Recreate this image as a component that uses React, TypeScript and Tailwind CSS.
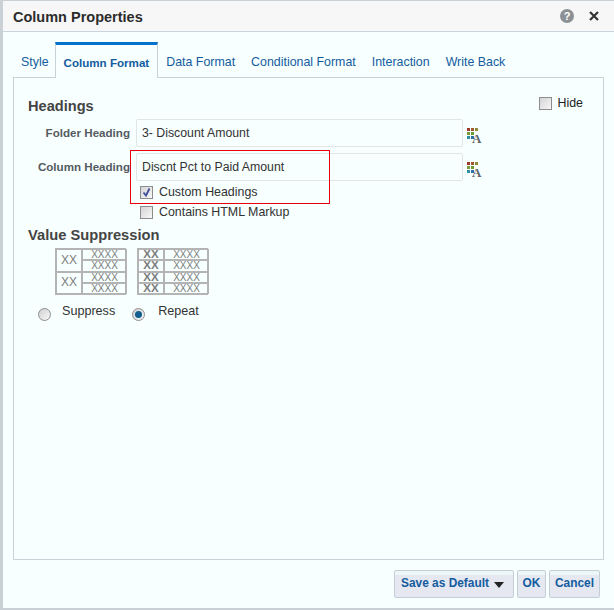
import React from "react";

const font = { fontFamily: '"Liberation Sans", Arial, sans-serif' };

const tabs = ["Style", "Column Format", "Data Format", "Conditional Format", "Interaction", "Write Back"];

const FormatIcon = () => (
  <svg width="18" height="19" viewBox="0 0 18 19" className="shrink-0">
    <rect x="1" y="0" width="3" height="3" fill="#9c3a32" />
    <rect x="5" y="0" width="3" height="3" fill="#a3552c" />
    <rect x="9" y="0" width="3" height="3" fill="#8f8a3a" />
    <rect x="1" y="4" width="3" height="3" fill="#7a9a35" />
    <rect x="5" y="4" width="3" height="3" fill="#6f9a35" />
    <rect x="1" y="8" width="3" height="3" fill="#2f8f9c" />
    <rect x="5" y="8" width="3" height="3" fill="#2d6fa8" />
    <text x="6" y="15" fontSize="13" fontWeight="700" fill="#5f6468" fontFamily="Liberation Serif, serif">A</text>
  </svg>
);

const Check = ({ checked }: { checked?: boolean }) => (
  <span className="relative block h-[13px] w-[13px] shrink-0 border border-[#8d8d8d] bg-gradient-to-br from-[#d4d4d4] to-[#f8f8f8]">
    {checked && (
      <svg viewBox="0 0 11 11" className="absolute inset-0 h-[11px] w-[11px]">
        <path d="M2.5 5.5 L5 8.5 L8.5 1.5" fill="none" stroke="#3f4f9a" strokeWidth="1.8" />
      </svg>
    )}
  </span>
);

const Radio = ({ on }: { on?: boolean }) => (
  <span className="flex h-[13px] w-[13px] shrink-0 items-center justify-center rounded-full border border-[#8d8d8d] bg-gradient-to-br from-[#d0d0d0] to-[#f8f8f8]">
    {on && <span className="block h-[7px] w-[7px] rounded-full bg-[#125f8f]" />}
  </span>
);

const PatternCell = ({ children, className = "" }: { children: React.ReactNode; className?: string }) => (
  <div className={`flex min-h-0 items-center justify-center overflow-hidden border border-[#b4b4b4] text-[#7d7d7d] ${className}`}>
    {children}
  </div>
);

const Pattern = ({ merged }: { merged?: boolean }) => {
  const xxxx = [0, 1, 2, 3];
  return (
    <div className="grid h-[47px] w-[71px] grid-cols-[26px_45px] grid-rows-4 border border-[#b4b4b4] text-[10px] leading-[9px]">
      {merged ? (
        <>
          <PatternCell className="row-span-2 col-start-1 row-start-1 text-[12px]">XX</PatternCell>
          <PatternCell className="row-span-2 col-start-1 row-start-3 text-[12px]">XX</PatternCell>
        </>
      ) : (
        xxxx.map((i) => (
          <PatternCell key={i} className={`col-start-1 text-[11.5px] font-bold ${["row-start-1", "row-start-2", "row-start-3", "row-start-4"][i]}`}>
            XX
          </PatternCell>
        ))
      )}
      {xxxx.map((i) => (
        <PatternCell key={i} className={`col-start-2 ${["row-start-1", "row-start-2", "row-start-3", "row-start-4"][i]}`}>
          XXXX
        </PatternCell>
      ))}
    </div>
  );
};

const HeadingRow = ({ label, value }: { label: string; value: string }) => (
  <div className="flex items-start">
    <div className="mt-[5px] w-[102px] whitespace-nowrap text-right text-[11.6px] font-bold text-[#555b61]">{label}</div>
    <div className="ml-[6px] flex h-[28px] w-[327px] items-center rounded-[2px] border border-[#e0e6e6] pl-[5px] text-[12.3px] text-[#333]">
      {value}
    </div>
    <div className="ml-[3px] mt-[9px]">
      <FormatIcon />
    </div>
  </div>
);

export default function App() {
  return (
    <div
      style={font}
      className="relative flex h-[610px] w-[614px] flex-col overflow-hidden border-l-[3px] border-t border-b-[2px] border-[#c9d0d6] bg-[#f7ffff]"
    >
      <div className="flex h-[31px] shrink-0 items-center justify-between border-b border-[#c9d5dd] bg-[#f7f7f7] pl-[10px] pr-[15px]">
        <span className="pt-[3px] text-[14.5px] font-bold text-[#2c2c2c]">Column Properties</span>
        <div className="flex items-center gap-[15px]">
          <span className="flex h-[14px] w-[14px] items-center justify-center rounded-full bg-[#8b9195] text-[11px] font-bold text-white">?</span>
          <svg width="10" height="10" viewBox="0 0 10 10">
            <path d="M1 1 L9 9 M9 1 L1 9" stroke="#333" strokeWidth="2.2" />
          </svg>
        </div>
      </div>

      <div className="flex h-[45px] shrink-0 items-end pl-[10px] pr-[10px]">
        <div className="z-10 -mb-[1px] flex items-end">
          {tabs.map((t) =>
            t === "Column Format" ? (
              <div
                key={t}
                className="flex h-[36px] items-center whitespace-nowrap border-x border-t-[3px] border-[#c9d2d6] border-t-[#0572ce] bg-[#f7ffff] px-[8px] pt-[2px] text-[11.6px] font-bold text-[#145c9e]"
              >
                {t}
              </div>
            ) : (
              <div
                key={t}
                className={`flex h-[36px] items-center whitespace-nowrap pl-[8px] pt-[4px] text-[12.4px] text-[#145c9e] ${t === "Style" ? "pr-[6px]" : "pr-[8px]"}`}
              >
                {t}
              </div>
            )
          )}
        </div>
      </div>

      <div className="mx-[10px] flex h-[483px] shrink-0 flex-col border border-[#c9d2d6] pl-[14px] pt-[20px]">
        <div className="flex h-[17px] items-start justify-between pr-[20px]">
          <div className="text-[14.6px] font-bold leading-[17px] text-[#444]">Headings</div>
          <label className="-mt-[4px] flex items-center gap-[6px] text-[12.4px] text-[#222]">
            <Check />
            Hide
          </label>
        </div>

        <div className="mt-[4px] flex flex-col gap-[6px]">
          <HeadingRow label="Folder Heading" value="3- Discount Amount" />
          <HeadingRow label="Column Heading" value="Discnt Pct to Paid Amount" />
        </div>

        <div className="ml-[112px] mt-[5px] flex flex-col gap-[7px] text-[12.4px] leading-[13px] text-[#333]">
          <label className="flex items-center gap-[6px]">
            <Check checked />
            Custom Headings
          </label>
          <label className="flex items-center gap-[6px]">
            <Check />
            Contains HTML Markup
          </label>
        </div>

        <div className="mt-[8px] text-[14.7px] font-bold leading-[17px] text-[#444]">Value Suppression</div>
        <div className="ml-[27px] mt-[4px] flex gap-[11px]">
          <Pattern merged />
          <Pattern />
        </div>
        <div className="ml-[10px] mt-[13px] flex items-center text-[12.6px] text-[#333]">
          <Radio />
          <span className="ml-[11px] -mt-[6px]">Suppress</span>
          <span className="ml-[17px]">
            <Radio on />
          </span>
          <span className="ml-[13px] -mt-[6px]">Repeat</span>
        </div>
      </div>

      <div className="flex flex-1 items-start justify-end gap-[3px] pr-[14px] pt-[10px] text-[11.9px] font-bold text-[#145c9e]">
        <button className="flex h-[28px] w-[120px] items-center justify-center gap-[5px] rounded-[2px] border border-[#c4ced7] bg-gradient-to-b from-[#eef7f7] from-[15%] to-[#e5e8f1] to-[15%] pr-[3px]">
          Save as Default
          <span className="mt-[1px] h-0 w-0 border-x-[5px] border-t-[6px] border-x-transparent border-t-[#222]" />
        </button>
        <button className="flex h-[28px] w-[29px] items-center justify-center rounded-[2px] border border-[#c4ced7] bg-gradient-to-b from-[#eef7f7] from-[15%] to-[#e5e8f1] to-[15%]">
          OK
        </button>
        <button className="flex h-[28px] w-[51px] items-center justify-center rounded-[2px] border border-[#c4ced7] bg-gradient-to-b from-[#eef7f7] from-[15%] to-[#e5e8f1] to-[15%]">
          Cancel
        </button>
      </div>

      {/* red annotation box drawn on top of the screenshot */}
      <div className="absolute left-[127px] top-[149px] h-[54px] w-[200px] border border-red-600" />
    </div>
  );
}
